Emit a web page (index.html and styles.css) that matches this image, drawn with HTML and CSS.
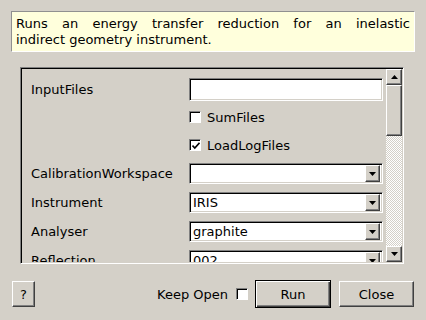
FILE: index.html
```html
<!DOCTYPE html>
<html lang="en">

<head>
    <meta charset="UTF-8">
    <meta name="viewport" content="width=device-width, initial-scale=1.0">
    <title>Algorithm Dialog</title>
    <link rel="stylesheet" href="styles.css">
</head>

<body>
    <div class="dialog">
        <p class="desc"><span class="line-full">Runs an energy transfer reduction for an inelastic</span>indirect geometry instrument.</p>

        <div class="frame">
            <div class="props">
                <div class="row">
                    <span class="label">InputFiles</span>
                    <span class="text-input"></span>
                </div>
                <div class="row check-row first">
                    <span class="label"></span>
                    <span class="check"><span class="box"></span>SumFiles</span>
                </div>
                <div class="row check-row">
                    <span class="label"></span>
                    <span class="check"><span class="box checked"><svg width="8" height="8" viewBox="0 0 8 8"><path d="M0.5 3.5 L2.8 6 L7.5 0.8" fill="none" stroke="#000" stroke-width="1.6"/></svg></span>LoadLogFiles</span>
                </div>
                <div class="row combo-row first-combo">
                    <span class="label">CalibrationWorkspace</span>
                    <span class="combo"><span class="value"></span><span class="arrow"><svg width="7" height="4" viewBox="0 0 7 4"><path d="M0 0 H7 L3.5 4 Z" fill="#000"/></svg></span></span>
                </div>
                <div class="row combo-row">
                    <span class="label">Instrument</span>
                    <span class="combo"><span class="value">IRIS</span><span class="arrow"><svg width="7" height="4" viewBox="0 0 7 4"><path d="M0 0 H7 L3.5 4 Z" fill="#000"/></svg></span></span>
                </div>
                <div class="row combo-row">
                    <span class="label">Analyser</span>
                    <span class="combo"><span class="value">graphite</span><span class="arrow"><svg width="7" height="4" viewBox="0 0 7 4"><path d="M0 0 H7 L3.5 4 Z" fill="#000"/></svg></span></span>
                </div>
                <div class="row combo-row">
                    <span class="label">Reflection</span>
                    <span class="combo"><span class="value">002</span><span class="arrow"><svg width="7" height="4" viewBox="0 0 7 4"><path d="M0 0 H7 L3.5 4 Z" fill="#000"/></svg></span></span>
                </div>
            </div>

            <div class="scrollbar">
                <div class="sb-btn"><svg width="7" height="4" viewBox="0 0 7 4"><path d="M0 4 H7 L3.5 0 Z" fill="#000"/></svg></div>
                <div class="sb-thumb"></div>
                <div class="sb-track"></div>
                <div class="sb-btn"><svg width="7" height="4" viewBox="0 0 7 4"><path d="M0 0 H7 L3.5 4 Z" fill="#000"/></svg></div>
            </div>
        </div>

        <div class="actions">
            <button class="btn help" type="button">?</button>
            <span class="keep-open">Keep Open<span class="box"></span></span>
            <button class="btn run" type="button">Run</button>
            <button class="btn close" type="button">Close</button>
        </div>
    </div>
</body>

</html>
```

FILE: styles.css
```css
* {
    margin: 0;
    padding: 0;
    box-sizing: border-box;
}

body {
    font-family: "DejaVu Sans", sans-serif;
    font-size: 13px;
    color: #000;
    background-color: #d4d0c8;
}

.dialog {
    width: 426px;
    height: 320px;
    padding-top: 11px;
}

/* Description box */
.desc {
    margin: 0 11px;
    height: 41px;
    padding: 4px 4px 0;
    line-height: 16px;
    background-color: #ffffdc;
    border: 1px solid;
    border-color: #909090 #fff #fff #909090;
}

.line-full {
    display: block;
    text-align: justify;
    text-align-last: justify;
}

/* Sunken properties frame */
.frame {
    display: flex;
    margin: 15px 0 0 20px;
    width: 384px;
    height: 197px;
    border: 1px solid;
    border-color: #808080 #fff #fff #808080;
    box-shadow: inset 1px 1px #000, inset -1px -1px #d4d0c8;
    padding: 1px;
}

.props {
    flex: 1;
    overflow: hidden;
    padding: 9px 0 0 9px;
}

.row {
    display: flex;
    align-items: center;
}

.label {
    width: 158px;
    flex-shrink: 0;
}

.check-row {
    height: 28px;
}

.check-row.first {
    margin-top: 2px;
}

.combo-row {
    margin-top: 8px;
}

.combo-row.first-combo {
    margin-top: 4px;
}

.text-input,
.combo {
    display: flex;
    align-items: center;
    width: 194px;
    background-color: #fff;
    border: 1px solid;
    border-color: #808080 #fff #fff #808080;
    box-shadow: inset 1px 1px #000, inset -1px -1px #d4d0c8;
}

.text-input {
    height: 23px;
}

.combo {
    height: 21px;
    padding: 2px;
}

.combo .value {
    flex: 1;
    padding-left: 1px;
    line-height: 17px;
}

.combo .arrow,
.sb-btn {
    display: flex;
    justify-content: center;
    align-items: center;
    background-color: #d4d0c8;
    border: 1px solid;
    border-color: #fff #404040 #404040 #fff;
    box-shadow: inset -1px -1px #808080;
}

.combo .arrow {
    width: 15px;
    height: 17px;
}

.check {
    display: flex;
    align-items: center;
}

.box {
    display: inline-flex;
    justify-content: center;
    align-items: center;
    width: 12px;
    height: 12px;
    margin-right: 6px;
    background-color: #fff;
    border: 1px solid;
    border-color: #808080 #fff #fff #808080;
    box-shadow: inset 1px 1px #000;
}

.box svg {
    margin: 1px 0 0 1px;
}

/* Scrollbar */
.scrollbar {
    display: flex;
    flex-direction: column;
    width: 16px;
}

.sb-btn {
    height: 16px;
}

.sb-thumb {
    height: 51px;
    background-color: #d4d0c8;
    border: 1px solid;
    border-color: #fff #404040 #404040 #fff;
    box-shadow: inset -1px -1px #808080;
}

.sb-track {
    flex: 1;
    background: repeating-conic-gradient(#fff 0 25%, #d4d0c8 0 50%) 0 0 / 2px 2px;
}

/* Bottom buttons */
.actions {
    display: flex;
    align-items: center;
    height: 28px;
    margin-top: 16px;
    padding: 0 12px;
}

.btn {
    font-family: "DejaVu Sans", sans-serif;
    font-size: 13px;
    color: #000;
    height: 26px;
    background-color: #d4d0c8;
    border: 1px solid;
    border-color: #fff #404040 #404040 #fff;
    box-shadow: inset -1px -1px #808080;
}

.help {
    width: 23px;
}

.keep-open {
    display: flex;
    align-items: center;
    margin-left: auto;
}

.keep-open .box {
    margin: 0 0 0 8px;
}

.run {
    width: 76px;
    height: 28px;
    margin-left: 7px;
    border: 1px solid #000;
    box-shadow: inset 1px 1px #fff, inset -1px -1px #404040, inset -2px -2px #808080;
}

.close {
    width: 75px;
    margin-left: 8px;
}
```
